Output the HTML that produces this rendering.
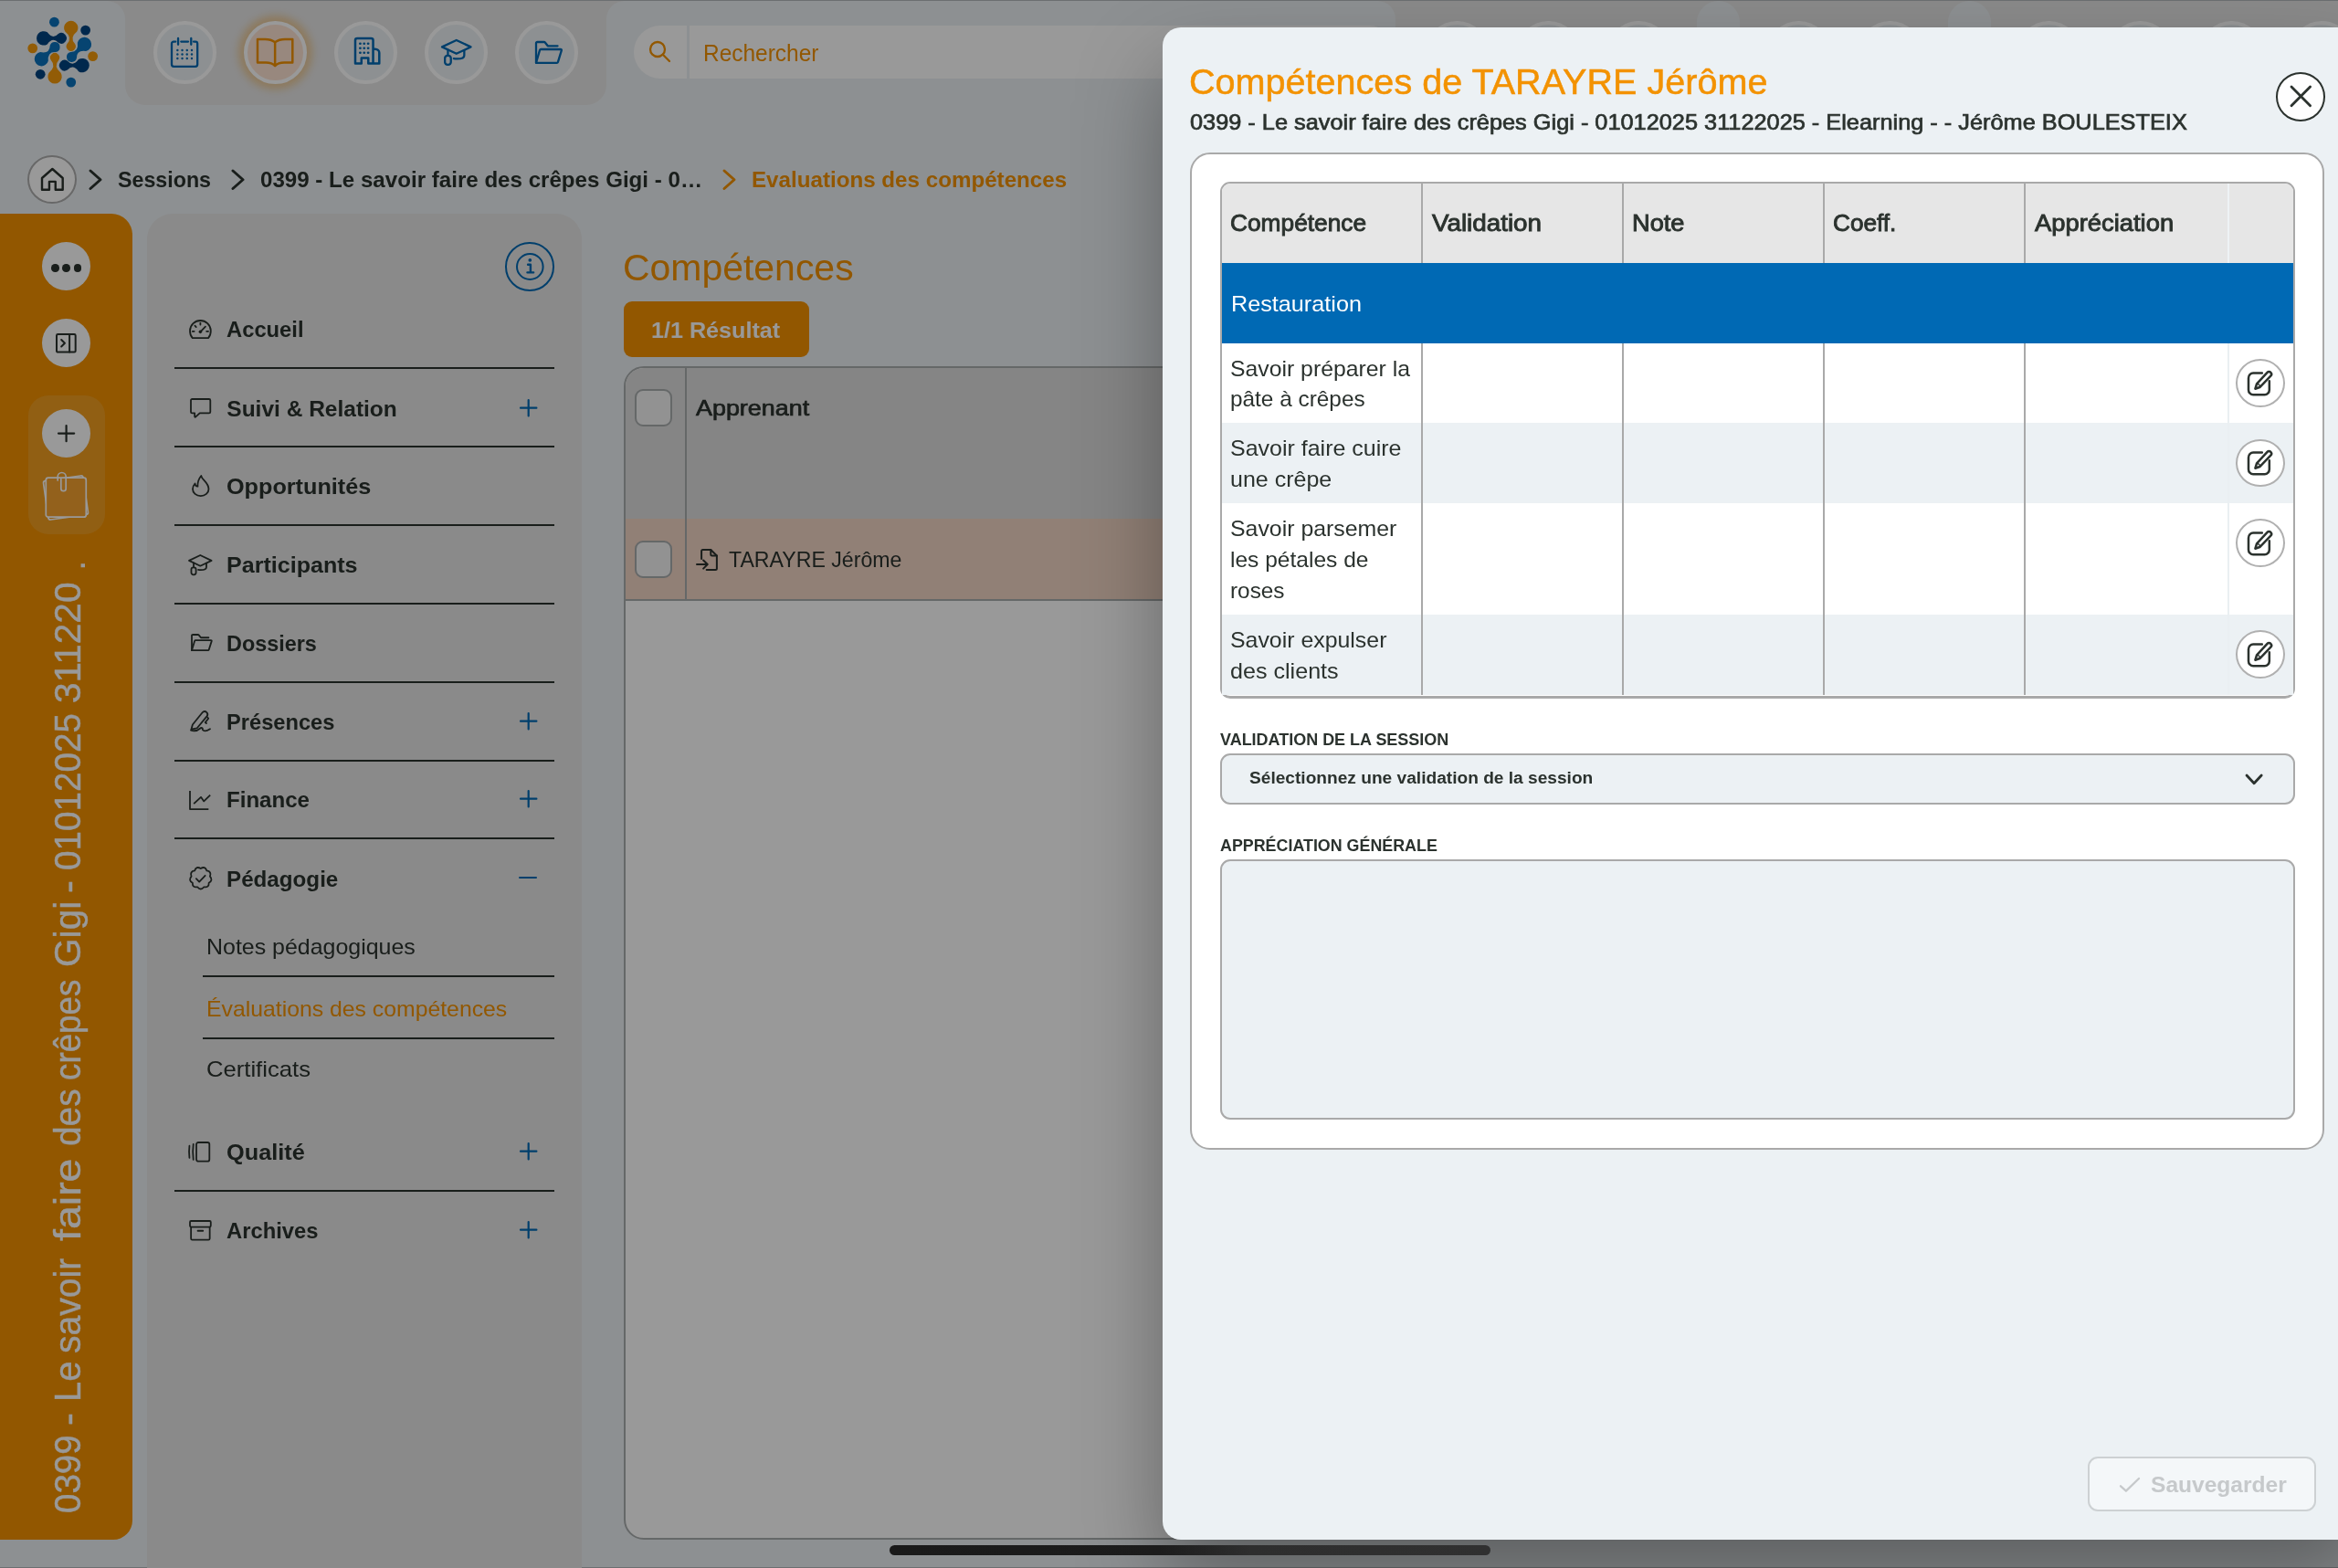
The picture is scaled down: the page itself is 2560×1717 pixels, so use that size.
<!DOCTYPE html>
<html lang="fr"><head><meta charset="utf-8"><title>Compétences de TARAYRE Jérôme</title>
<style>
html,body{margin:0;padding:0}
body{width:2560px;height:1717px;overflow:hidden;position:relative;background:#ecf1f4;font-family:"Liberation Sans",sans-serif;color:#2b322e}
.a{position:absolute;box-sizing:border-box}
.t{position:absolute;white-space:nowrap;line-height:1;transform-origin:0 50%}
.circ{position:absolute;box-sizing:border-box;border-radius:50%}
svg.i{overflow:visible}
svg.i *{vector-effect:non-scaling-stroke}
#under,#overlay,#drawer{position:absolute;left:0;top:0;width:2560px;height:1717px;overflow:hidden}
#under,#drawer{will-change:transform}
#overlay{background:rgba(0,0,0,.4)}
.ln{position:absolute;height:2px;background:#2b322e}
</style></head><body>
<div id="under">

<div class="a" style="left:0px;top:0px;width:2560px;height:1.3px;background:#b4babd"></div>
<div class="a" style="left:0px;top:1715.5px;width:2560px;height:1.5px;background:#b4babd"></div>
<div class="a" style="left:137px;top:1px;width:527px;height:113.5px;background:#e6e6e6;border-radius:0 0 22px 22px"></div>
<div class="a" style="left:110px;top:1px;width:30px;height:31px;background:#e6e6e6"></div>
<div class="a" style="left:660px;top:1px;width:30px;height:31px;background:#e6e6e6"></div>
<div class="a" style="left:1500px;top:1px;width:40px;height:31px;background:#e6e6e6"></div>
<div class="a" style="left:0px;top:1px;width:137px;height:101px;background:#ecf1f4;border-top-right-radius:20px"></div>
<div class="a" style="left:664px;top:1px;width:864px;height:101px;background:#ecf1f4;border-top-left-radius:20px;border-top-right-radius:20px"></div>
<div class="a" style="left:1528px;top:1px;width:1100px;height:113.5px;background:#e6e6e6;border-radius:0 0 0 22px"></div>
<div class="circ" style="left:1560.5px;top:22.7px;width:69.0px;height:69.0px;border:4px solid #fff;background:#ecf1f4"></div>
<div class="circ" style="left:1660.5px;top:22.7px;width:69.0px;height:69.0px;border:4px solid #fff;background:#ecf1f4"></div>
<div class="circ" style="left:1760.2px;top:22.7px;width:69.0px;height:69.0px;border:4px solid #fff;background:#ecf1f4"></div>
<div class="circ" style="left:1934.5px;top:22.7px;width:69.0px;height:69.0px;border:4px solid #fff;background:#ecf1f4"></div>
<div class="circ" style="left:2034.5px;top:22.7px;width:69.0px;height:69.0px;border:4px solid #fff;background:#ecf1f4"></div>
<div class="circ" style="left:2209.0px;top:22.7px;width:69.0px;height:69.0px;border:4px solid #fff;background:#ecf1f4"></div>
<div class="circ" style="left:2308.5px;top:22.7px;width:69.0px;height:69.0px;border:4px solid #fff;background:#ecf1f4"></div>
<div class="circ" style="left:2408.5px;top:22.7px;width:69.0px;height:69.0px;border:4px solid #fff;background:#ecf1f4"></div>
<div class="circ" style="left:2508.3px;top:22.7px;width:69.0px;height:69.0px;border:4px solid #fff;background:#ecf1f4"></div>
<div class="a" style="left:1858px;top:1px;width:47px;height:71px;background:#ecf1f4;border-radius:23.5px"></div>
<div class="a" style="left:2133px;top:1px;width:47px;height:71px;background:#ecf1f4;border-radius:23.5px"></div>
<svg class="a" style="left:0;top:0" width="140" height="110" viewBox="0 0 909.2 714.3"><circle cx="386" cy="157" r="35" fill="#0a72bd"/><path fill="#f39a0a" d="M462.6 224.5Q517.8 268.5 477.0 312.5A33 33 0 1 0 533.0 312.5Q492.2 268.5 547.4 224.5A50 50 0 1 0 462.6 224.5z"/><circle cx="608" cy="215" r="35" fill="#004480"/><path fill="#004480" d="M336.5 314.4Q375.7 260.5 414.9 304.2A38 38 0 1 0 414.9 239.8Q375.7 283.5 336.5 229.6A50 50 0 1 0 336.5 314.4z"/><circle cx="232" cy="343" r="35" fill="#f39a0a"/><path fill="#0a72bd" d="M551.3 303.8Q560.9 371.1 501.9 369.9A36 36 0 1 0 545.1 413.1Q543.9 354.1 611.2 363.7A50 50 0 1 0 551.3 303.8z"/><path fill="#0a72bd" d="M355.4 325.0Q353.3 384.0 286.5 370.7A50 50 0 1 0 343.0 433.9Q337.3 366.1 396.1 370.5A36 36 0 1 0 355.4 325.0z"/><circle cx="660" cy="400" r="35" fill="#f39a0a"/><path fill="#f39a0a" d="M362.0 427.5Q402.8 473.0 347.6 518.5A50 50 0 1 0 432.4 518.5Q377.2 473.0 418.0 427.5A33 33 0 1 0 362.0 427.5z"/><path fill="#004480" d="M480.1 497.2Q519.3 453.5 558.5 507.4A50 50 0 1 0 558.5 422.6Q519.3 476.5 480.1 432.8A38 38 0 1 0 480.1 497.2z"/><circle cx="287" cy="528" r="35" fill="#004480"/><circle cx="505" cy="585" r="35" fill="#0a72bd"/></svg>
<div class="circ" style="left:167.8px;top:22.7px;width:69.0px;height:69.0px;border:4px solid #fff;background:#ecf1f4"></div>
<div class="circ" style="left:266.7px;top:22.7px;width:69.0px;height:69.0px;border:4px solid #fff;background:#fde3d2;box-shadow:0 0 9px 6px rgba(243,146,0,.33)"></div>
<div class="circ" style="left:365.9px;top:22.7px;width:69.0px;height:69.0px;border:4px solid #fff;background:#ecf1f4"></div>
<div class="circ" style="left:464.9px;top:22.7px;width:69.0px;height:69.0px;border:4px solid #fff;background:#ecf1f4"></div>
<div class="circ" style="left:564.1px;top:22.7px;width:69.0px;height:69.0px;border:4px solid #fff;background:#ecf1f4"></div>
<svg class="a i" style="left:188.15px;top:41.55px;color:#0069b4" width="28.20" height="30.80" viewBox="2.000 1.500 20.000 20.500" preserveAspectRatio="none" fill="none" stroke="currentColor" stroke-width="2.3" stroke-linecap="round" stroke-linejoin="round"><path d="M5 3.900H3.500A1.500 1.500 0 0 0 2 5.400v15.100A1.500 1.500 0 0 0 3.500 22h17a1.500 1.500 0 0 0 1.500-1.500V5.400A1.500 1.500 0 0 0 20.500 3.900H19M9.300 3.900h5.500"/><path d="M7 1.500v4.500M17.100 1.500v4.500"/><circle cx="6.5" cy="10.2" r="0.85" fill="currentColor" stroke="none"/><circle cx="10.2" cy="10.2" r="0.85" fill="currentColor" stroke="none"/><circle cx="13.9" cy="10.2" r="0.85" fill="currentColor" stroke="none"/><circle cx="17.6" cy="10.2" r="0.85" fill="currentColor" stroke="none"/><circle cx="6.5" cy="13.2" r="0.85" fill="currentColor" stroke="none"/><circle cx="10.2" cy="13.2" r="0.85" fill="currentColor" stroke="none"/><circle cx="13.9" cy="13.2" r="0.85" fill="currentColor" stroke="none"/><circle cx="17.6" cy="13.2" r="0.85" fill="currentColor" stroke="none"/><circle cx="6.5" cy="16.1" r="0.85" fill="currentColor" stroke="none"/><circle cx="10.2" cy="16.1" r="0.85" fill="currentColor" stroke="none"/><circle cx="13.9" cy="16.1" r="0.85" fill="currentColor" stroke="none"/><circle cx="17.6" cy="16.1" r="0.85" fill="currentColor" stroke="none"/></svg>
<svg class="a i" style="left:282.25px;top:43.05px;color:#f39200" width="38.30" height="29.20" viewBox="1.500 3.000 21.000 18.300" preserveAspectRatio="none" fill="none" stroke="currentColor" stroke-width="2.5" stroke-linecap="round" stroke-linejoin="round"><path d="M12 5C10.300 3.600 8.300 3 6 3H1.500v16H6.500c2.300 0 4.200 0.700 5.500 2.300c1.300-1.600 3.200-2.300 5.500-2.300H22.500V3H18c-2.300 0-4.300 0.600-6 2zM12 5v16"/></svg>
<svg class="a i" style="left:389.25px;top:42.45px;color:#0069b4" width="26.30" height="27.60" viewBox="2.000 2.000 17.500 20.000" preserveAspectRatio="none" fill="none" stroke="currentColor" stroke-width="2.5" stroke-linecap="round" stroke-linejoin="round"><path d="M2 22V3.500A1.500 1.500 0 0 1 3.500 2h10A1.500 1.500 0 0 1 15 3.500V22H11.500V17.500H6.500V22zM15 10.500h1.500a3 3 0 0 1 3 3V22H15"/><circle cx="5.6" cy="6.2" r="0.95" fill="currentColor" stroke="none"/><circle cx="8.5" cy="6.2" r="0.95" fill="currentColor" stroke="none"/><circle cx="11.4" cy="6.2" r="0.95" fill="currentColor" stroke="none"/><circle cx="5.6" cy="9.8" r="0.95" fill="currentColor" stroke="none"/><circle cx="8.5" cy="9.8" r="0.95" fill="currentColor" stroke="none"/><circle cx="11.4" cy="9.8" r="0.95" fill="currentColor" stroke="none"/><circle cx="5.6" cy="13.4" r="0.95" fill="currentColor" stroke="none"/><circle cx="8.5" cy="13.4" r="0.95" fill="currentColor" stroke="none"/><circle cx="11.4" cy="13.4" r="0.95" fill="currentColor" stroke="none"/></svg>
<svg class="a i" style="left:484.15px;top:44.15px;color:#0069b4" width="31.50" height="26.90" viewBox="1.000 2.000 22.000 20.000" preserveAspectRatio="none" fill="none" stroke="currentColor" stroke-width="2.3" stroke-linecap="round" stroke-linejoin="round"><path d="M12 2L1 7.500L12 13L23 7.500z"/><path d="M5.500 10v4.500"/><path d="M18 10.200v4c0 2-2.500 3-5.500 3c-1 0-1.800-0.080-2.500-0.250"/><rect x="3.200" y="14.500" width="4.600" height="7.500" rx="2.100"/></svg>
<svg class="a i" style="left:586.95px;top:45.75px;color:#0069b4" width="27.90" height="22.80" viewBox="2.000 2.500 20.729 18.501" preserveAspectRatio="none" fill="none" stroke="currentColor" stroke-width="2.3" stroke-linecap="round" stroke-linejoin="round"><path d="M2 21V3.500A1 1 0 0 1 3 2.500h5.500a1 1 0 0 1 0.800 0.400L11.500 6H19.500"/><path d="M2 21L5 9.700a1 1 0 0 1 1-0.700H22a0.700 0.700 0 0 1 0.700 0.900L19.800 20.300a1 1 0 0 1-1 0.700z"/></svg>
<div class="a" style="left:693.9px;top:28.4px;width:58px;height:57.3px;background:#fff;border-radius:29px 0 0 29px"></div>
<div class="a" style="left:755.4px;top:28.4px;width:772.6px;height:57.3px;background:#fff;border-radius:0 29px 29px 0"></div>
<svg class="a i" style="left:711.95px;top:45.75px;color:#f39200" width="21.00" height="21.00" viewBox="1.000 1.000 21.000 21.000" preserveAspectRatio="none" fill="none" stroke="currentColor" stroke-width="2.3" stroke-linecap="round" stroke-linejoin="round"><circle cx="9" cy="9" r="8"/><path d="M14.800 14.800L22 22"/></svg>
<span id="t1" class="t " style="left:770.44px;top:45.5px;font-size:25px;color:#f39200;transform:scaleX(0.9787);">Rechercher</span>
<div class="circ" style="left:30.3px;top:170.0px;width:53.4px;height:52.8px;border:2px solid #adadad;background:#fff"></div>
<svg class="a i" style="left:46.00px;top:184.60px;color:#2b322e" width="22.70" height="22.80" viewBox="2.000 1.500 20.000 20.500" preserveAspectRatio="none" fill="none" stroke="currentColor" stroke-width="2.4" stroke-linecap="round" stroke-linejoin="round"><path d="M2 10.500L12 1.500l10 9V22h-7v-8H9v8H2z"/></svg>
<svg class="a i" style="left:98.50px;top:187.00px;color:#2b322e" width="11.00" height="19.50" viewBox="0.000 0.000 11.000 22.000" preserveAspectRatio="none" fill="none" stroke="currentColor" stroke-width="3" stroke-linecap="round" stroke-linejoin="round"><path d="M0 0l11 11L0 22"/></svg>
<span id="t2" class="t " style="left:129.34px;top:184.9px;font-size:24.5px;color:#2b322e;transform:scaleX(0.9485);font-weight:700;">Sessions</span>
<svg class="a i" style="left:254.50px;top:187.00px;color:#2b322e" width="11.00" height="19.50" viewBox="0.000 0.000 11.000 22.000" preserveAspectRatio="none" fill="none" stroke="currentColor" stroke-width="3" stroke-linecap="round" stroke-linejoin="round"><path d="M0 0l11 11L0 22"/></svg>
<span id="t3" class="t " style="left:285.11px;top:184.9px;font-size:24.5px;color:#2b322e;transform:scaleX(0.9846);font-weight:700;">0399 - Le savoir faire des crêpes Gigi - 0…</span>
<svg class="a i" style="left:793.00px;top:187.00px;color:#f39200" width="11.00" height="19.50" viewBox="0.000 0.000 11.000 22.000" preserveAspectRatio="none" fill="none" stroke="currentColor" stroke-width="3" stroke-linecap="round" stroke-linejoin="round"><path d="M0 0l11 11L0 22"/></svg>
<span id="t4" class="t " style="left:823.42px;top:184.9px;font-size:24.5px;color:#f39200;transform:scaleX(0.9864);font-weight:700;">Evaluations des compétences</span>
<div class="a" style="left:0px;top:234px;width:145px;height:1451.5px;background:#f39200;border-radius:0 23px 21px 0"></div>
<div class="circ" style="left:45.7px;top:265.2px;width:53.5px;height:53.3px;background:#fff"></div>
<div class="circ" style="left:56.1px;top:289.2px;width:8.5px;height:8.5px;background:#2b322e"></div>
<div class="circ" style="left:68.2px;top:289.2px;width:8.5px;height:8.5px;background:#2b322e"></div>
<div class="circ" style="left:80.5px;top:289.2px;width:8.5px;height:8.5px;background:#2b322e"></div>
<div class="circ" style="left:45.7px;top:349.2px;width:53.5px;height:53.3px;background:#fff"></div>
<svg class="a i" style="left:62.30px;top:365.90px;color:#2b322e" width="20.70" height="19.60" viewBox="0.000 0.000 22.000 21.000" preserveAspectRatio="none" fill="none" stroke="currentColor" stroke-width="2" stroke-linecap="round" stroke-linejoin="round"><rect x="0" y="0" width="22" height="21" rx="1.500"/><path d="M15 0v21M5.500 6.500l4 4-4 4"/></svg>
<div class="a" style="left:30.7px;top:433px;width:84.1px;height:152.3px;background:rgba(236,241,244,.13);border-radius:22px"></div>
<div class="circ" style="left:45.7px;top:448.0px;width:53.5px;height:53.3px;background:#fff"></div>
<svg class="a i" style="left:64.20px;top:466.00px;color:#2b322e" width="17.20" height="17.20" viewBox="0.000 0.000 20.000 20.000" preserveAspectRatio="none" fill="none" stroke="currentColor" stroke-width="2.2" stroke-linecap="round" stroke-linejoin="round"><path d="M10 0v20M0 10h20"/></svg>
<svg class="a i" style="left:46.300px;top:517px;color:#ffffff" width="52.2" height="52.5" viewBox="0 0 52.2 52.5" fill="none" stroke="currentColor" stroke-width="1.700" stroke-linejoin="round" stroke-linecap="round"><g transform="rotate(-8 26 28)"><rect x="4" y="6.500" width="44" height="43" rx="2.500"/></g><rect x="4.300" y="6.200" width="44" height="43" rx="2.500" fill="#f5a230"/><path d="M17.200 9V5a4.500 4.500 0 0 1 9 0v13a2.700 2.700 0 0 1-5.400 0V7.500"/></svg>
<span id="t5" class="t" style="left:73.5px;top:1657.1px;-webkit-text-stroke:.4px #fff;font-size:41.5px;color:#fff;transform-origin:0 0;transform:rotate(-90deg) translateY(-50%) scaleX(0.9268)">0399 </span>
<span id="t6" class="t" style="left:73.5px;top:1560.8px;-webkit-text-stroke:.4px #fff;font-size:41.5px;color:#fff;transform-origin:0 0;transform:rotate(-90deg) translateY(-50%) scaleX(1.0000)">- </span>
<span id="t7" class="t" style="left:73.5px;top:1534.8px;-webkit-text-stroke:.4px #fff;font-size:41.5px;color:#fff;transform-origin:0 0;transform:rotate(-90deg) translateY(-50%) scaleX(0.9627)">Le </span>
<span id="t8" class="t" style="left:73.5px;top:1482.3px;-webkit-text-stroke:.4px #fff;font-size:41.5px;color:#fff;transform-origin:0 0;transform:rotate(-90deg) translateY(-50%) scaleX(0.9413)">savoir </span>
<span id="t9" class="t" style="left:73.5px;top:1359.3px;-webkit-text-stroke:.4px #fff;font-size:41.5px;color:#fff;transform-origin:0 0;transform:rotate(-90deg) translateY(-50%) scaleX(1.1208)">faire </span>
<span id="t10" class="t" style="left:73.5px;top:1255.2px;-webkit-text-stroke:.4px #fff;font-size:41.5px;color:#fff;transform-origin:0 0;transform:rotate(-90deg) translateY(-50%) scaleX(0.9360)">des </span>
<span id="t11" class="t" style="left:73.5px;top:1182.9px;-webkit-text-stroke:.4px #fff;font-size:41.5px;color:#fff;transform-origin:0 0;transform:rotate(-90deg) translateY(-50%) scaleX(0.8863)">crêpes </span>
<span id="t12" class="t" style="left:73.5px;top:1058.6px;-webkit-text-stroke:.4px #fff;font-size:41.5px;color:#fff;transform-origin:0 0;transform:rotate(-90deg) translateY(-50%) scaleX(0.9795)">Gigi </span>
<span id="t13" class="t" style="left:73.5px;top:978.3px;-webkit-text-stroke:.4px #fff;font-size:41.5px;color:#fff;transform-origin:0 0;transform:rotate(-90deg) translateY(-50%) scaleX(1.0000)">- </span>
<span id="t14" class="t" style="left:73.5px;top:953.0px;-webkit-text-stroke:.4px #fff;font-size:41.5px;color:#fff;transform-origin:0 0;transform:rotate(-90deg) translateY(-50%) scaleX(0.9308)">01012025 </span>
<span id="t15" class="t" style="left:73.5px;top:770.4px;-webkit-text-stroke:.4px #fff;font-size:41.5px;color:#fff;transform-origin:0 0;transform:rotate(-90deg) translateY(-50%) scaleX(0.9784)">311220 </span>
<span class="t" style="left:76.5px;top:624.5px;font-size:41.5px;color:#fff;transform-origin:0 0;transform:rotate(-90deg) translateY(-46%)">.</span>
<div class="a" style="left:160.7px;top:234px;width:476px;height:1500px;background:#e6e6e6;border-radius:28px 28px 0 0"></div>
<div class="circ" style="left:553.2px;top:265.2px;width:53.5px;height:53.5px;border:2.5px solid #0069b4"></div>
<svg class="a i" style="left:565.70px;top:278.20px;color:#0069b4" width="28.60" height="28.00" viewBox="0.500 0.500 23.000 23.000" preserveAspectRatio="none" fill="none" stroke="currentColor" stroke-width="2" stroke-linecap="round" stroke-linejoin="round"><circle cx="12" cy="12" r="11.500"/><path d="M10.200 10.200h2.300v7M9.700 17.200h5.400" stroke-width="2.400"/><circle cx="12" cy="6.200" r="1.500" fill="currentColor" stroke="none"/></svg>
<span id="t16" class="t " style="left:248.30px;top:349.3px;font-size:24.5px;color:#2b322e;transform:scaleX(0.9702);font-weight:700;">Accueil</span>
<svg class="a i" style="left:208.00px;top:350.90px;color:#2b322e" width="22.80" height="19.10" viewBox="1.700 2.496 20.600 17.004" preserveAspectRatio="none" fill="none" stroke="currentColor" stroke-width="1.8" stroke-linecap="round" stroke-linejoin="round"><path d="M4.180 19.500A10.300 10.300 0 1 1 19.820 19.500z"/><circle cx="12" cy="13.500" r="1.600" fill="currentColor" stroke="none"/><path d="M12.700 12.800L17 8.500M12 4.800v1.700M4.200 13h1.700M18.100 13h1.700M6.600 7.600l1.200 1.200"/></svg>
<div class="ln" style="left:191px;top:402.4px;width:416px"></div>
<span id="t17" class="t " style="left:248.30px;top:435.6px;font-size:24.5px;color:#2b322e;font-weight:700;">Suivi &amp; Relation</span>
<svg class="a i" style="left:208.70px;top:437.10px;color:#2b322e" width="21.30" height="19.80" viewBox="-0.000 0.000 23.000 21.155" preserveAspectRatio="none" fill="none" stroke="currentColor" stroke-width="1.8" stroke-linecap="round" stroke-linejoin="round"><path d="M1.500 0h20a1.500 1.500 0 0 1 1.500 1.500v13.500a1.500 1.500 0 0 1-1.500 1.500H10.500L5.500 21a0.600 0.600 0 0 1-1-0.500V16.500H1.500A1.500 1.500 0 0 1 0 15V1.500A1.500 1.500 0 0 1 1.500 0z"/></svg>
<svg class="a i" style="left:569.50px;top:437.80px;color:#0069b4" width="17.40" height="17.40" viewBox="0.000 0.000 20.000 20.000" preserveAspectRatio="none" fill="none" stroke="currentColor" stroke-width="2.2" stroke-linecap="round" stroke-linejoin="round"><path d="M10 0v20M0 10h20"/></svg>
<div class="ln" style="left:191px;top:488.4px;width:416px"></div>
<span id="t18" class="t " style="left:248.30px;top:521.3px;font-size:24.5px;color:#2b322e;transform:scaleX(1.0290);font-weight:700;">Opportunités</span>
<svg class="a i" style="left:210.60px;top:521.20px;color:#2b322e" width="17.50" height="22.20" viewBox="4.000 0.500 16.000 23.000" preserveAspectRatio="none" fill="none" stroke="currentColor" stroke-width="1.8" stroke-linecap="round" stroke-linejoin="round"><path d="M12.500 0.500C13 5 20 8 20 15.500A8 8 0 0 1 4 15.500C4 13 5 11 6.300 9.300C6.500 11.300 7.500 12.500 9 12.600C8.800 8.500 10.300 3.500 12.500 0.500z"/></svg>
<div class="ln" style="left:191px;top:574.4px;width:416px"></div>
<span id="t19" class="t " style="left:248.30px;top:607.3px;font-size:24.5px;color:#2b322e;transform:scaleX(1.0236);font-weight:700;">Participants</span>
<svg class="a i" style="left:207.20px;top:607.70px;color:#2b322e" width="24.60" height="21.30" viewBox="1.000 2.000 22.000 20.000" preserveAspectRatio="none" fill="none" stroke="currentColor" stroke-width="1.8" stroke-linecap="round" stroke-linejoin="round"><path d="M12 2L1 7.500L12 13L23 7.500z"/><path d="M5.500 10v4.500"/><path d="M18 10.200v4c0 2-2.500 3-5.500 3c-1 0-1.800-0.080-2.500-0.250"/><rect x="3.200" y="14.500" width="4.600" height="7.500" rx="2.100"/></svg>
<div class="ln" style="left:191px;top:660.1999999999999px;width:416px"></div>
<span id="t20" class="t " style="left:248.30px;top:692.8px;font-size:24.5px;color:#2b322e;transform:scaleX(0.9544);font-weight:700;">Dossiers</span>
<svg class="a i" style="left:209.70px;top:695.30px;color:#2b322e" width="21.80" height="17.20" viewBox="2.000 2.500 20.729 18.501" preserveAspectRatio="none" fill="none" stroke="currentColor" stroke-width="1.8" stroke-linecap="round" stroke-linejoin="round"><path d="M2 21V3.500A1 1 0 0 1 3 2.500h5.500a1 1 0 0 1 0.800 0.400L11.500 6H19.500"/><path d="M2 21L5 9.700a1 1 0 0 1 1-0.700H22a0.700 0.700 0 0 1 0.700 0.900L19.800 20.300a1 1 0 0 1-1 0.700z"/></svg>
<div class="ln" style="left:191px;top:746.1999999999999px;width:416px"></div>
<span id="t21" class="t " style="left:248.30px;top:778.5px;font-size:24.5px;color:#2b322e;transform:scaleX(0.9657);font-weight:700;">Présences</span>
<svg class="a i" style="left:209.00px;top:778.90px;color:#2b322e" width="21.00" height="21.30" viewBox="0.300 1.750 22.200 21.260" preserveAspectRatio="none" fill="none" stroke="currentColor" stroke-width="1.8" stroke-linecap="round" stroke-linejoin="round"><path d="M0.800 21.300L2.300 16.200L13.800 2.800a3.300 3.300 0 0 1 5 4.300L7.300 20.200z"/><path d="M19.600 8.300l1 1.200l-3.700 4.300l1.300 1"/><path d="M0.300 22.300c4 1.200 8 0.400 10.500-1.800c1.600-1.400 3.700-0.700 3 1.200c1.700 2.200 5.200 1.400 8.700-0.700"/></svg>
<svg class="a i" style="left:569.50px;top:780.70px;color:#0069b4" width="17.40" height="17.40" viewBox="0.000 0.000 20.000 20.000" preserveAspectRatio="none" fill="none" stroke="currentColor" stroke-width="2.2" stroke-linecap="round" stroke-linejoin="round"><path d="M10 0v20M0 10h20"/></svg>
<div class="ln" style="left:191px;top:831.9px;width:416px"></div>
<span id="t22" class="t " style="left:248.30px;top:864.2px;font-size:24.5px;color:#2b322e;transform:scaleX(0.9831);font-weight:700;">Finance</span>
<svg class="a i" style="left:208.00px;top:865.60px;color:#2b322e" width="22.20" height="20.10" viewBox="0.000 0.000 24.000 22.000" preserveAspectRatio="none" fill="none" stroke="currentColor" stroke-width="1.8" stroke-linecap="butt" stroke-linejoin="round"><path d="M0 0v22h22"/><path d="M4.500 15.500l8.500-8 3.500 5L24 5"/></svg>
<svg class="a i" style="left:569.50px;top:866.40px;color:#0069b4" width="17.40" height="17.40" viewBox="0.000 0.000 20.000 20.000" preserveAspectRatio="none" fill="none" stroke="currentColor" stroke-width="2.2" stroke-linecap="round" stroke-linejoin="round"><path d="M10 0v20M0 10h20"/></svg>
<div class="ln" style="left:191px;top:917.4px;width:416px"></div>
<span id="t23" class="t " style="left:248.30px;top:950.5px;font-size:24.5px;color:#2b322e;transform:scaleX(0.9873);font-weight:700;">Pédagogie</span>
<svg class="a i" style="left:207.70px;top:949.60px;color:#2b322e" width="23.50" height="23.50" viewBox="-0.040 0.371 24.081 23.809" preserveAspectRatio="none" fill="none" stroke="currentColor" stroke-width="1.8" stroke-linecap="round" stroke-linejoin="round"><path d="M12.00 1.40Q16.93 -1.53 18.81 3.88Q24.47 4.80 22.44 10.16Q26.18 14.50 21.18 17.30Q21.26 23.03 15.63 21.96Q12.00 26.40 8.37 21.96Q2.74 23.03 2.82 17.30Q-2.18 14.50 1.56 10.16Q-0.47 4.80 5.19 3.88Q7.07 -1.53 12.00 1.40z"/><path d="M7 12.700l3.400 3.400L17 9.300"/></svg>
<div class="a" style="left:568.4px;top:960.3000000000001px;width:19.6px;height:2.2px;background:#0069b4;border-radius:1px"></div>
<span id="t24" class="t " style="left:248.30px;top:1249.7px;font-size:24.5px;color:#2b322e;transform:scaleX(1.0326);font-weight:700;">Qualité</span>
<svg class="a i" style="left:206.70px;top:1250.60px;color:#2b322e" width="22.30" height="20.70" viewBox="0.050 0.000 23.450 22.000" preserveAspectRatio="none" fill="none" stroke="currentColor" stroke-width="1.8" stroke-linecap="round" stroke-linejoin="round"><rect x="8.500" y="0" width="15" height="22" rx="2.200"/><path d="M5 2c-0.800 6-0.800 12 0 18M0.500 4c-0.600 4.700-0.600 9.300 0 14"/></svg>
<svg class="a i" style="left:569.50px;top:1251.90px;color:#0069b4" width="17.40" height="17.40" viewBox="0.000 0.000 20.000 20.000" preserveAspectRatio="none" fill="none" stroke="currentColor" stroke-width="2.2" stroke-linecap="round" stroke-linejoin="round"><path d="M10 0v20M0 10h20"/></svg>
<div class="ln" style="left:191px;top:1302.9px;width:416px"></div>
<span id="t25" class="t " style="left:248.30px;top:1335.9px;font-size:24.5px;color:#2b322e;transform:scaleX(0.9700);font-weight:700;">Archives</span>
<svg class="a i" style="left:208.00px;top:1336.50px;color:#2b322e" width="22.80" height="20.60" viewBox="0.000 0.000 24.000 22.000" preserveAspectRatio="none" fill="none" stroke="currentColor" stroke-width="1.8" stroke-linecap="round" stroke-linejoin="round"><rect x="0" y="0" width="24" height="7" rx="1.300"/><path d="M1.200 7v13.500a1.500 1.500 0 0 0 1.500 1.500h18.600a1.500 1.500 0 0 0 1.500-1.500V7M9 11.500h6"/></svg>
<svg class="a i" style="left:569.50px;top:1338.10px;color:#0069b4" width="17.40" height="17.40" viewBox="0.000 0.000 20.000 20.000" preserveAspectRatio="none" fill="none" stroke="currentColor" stroke-width="2.2" stroke-linecap="round" stroke-linejoin="round"><path d="M10 0v20M0 10h20"/></svg>
<span id="t26" class="t " style="left:226.20px;top:1024.7px;font-size:24px;color:#2b322e;transform:scaleX(1.0393);">Notes pédagogiques</span>
<div class="ln" style="left:221.600px;top:1068px;width:385.4px"></div>
<span id="t27" class="t " style="left:226.20px;top:1092.7px;font-size:24px;color:#f39200;transform:scaleX(1.0325);">Évaluations des compétences</span>
<div class="ln" style="left:221.600px;top:1136px;width:385.4px"></div>
<span id="t28" class="t " style="left:226.20px;top:1159.3px;font-size:24px;color:#2b322e;transform:scaleX(1.0681);">Certificats</span>
<span id="t29" class="t " style="left:682.48px;top:272.7px;font-size:40.5px;color:#f39200;transform:scaleX(1.0109);">Compétences</span>
<div class="a" style="left:683px;top:330px;width:202.5px;height:60.5px;background:#f39200;border-radius:9px"></div>
<span id="t30" class="t " style="left:712.83px;top:349.7px;font-size:24px;color:#fff;transform:scaleX(1.0479);font-weight:700;">1/1 Résultat</span>
<div class="a" style="left:683px;top:401px;width:1701px;height:1284.5px;background:#fff;border:2px solid #a9adae;border-radius:22px;overflow:hidden"></div>
<div class="a" style="left:685px;top:403px;width:1697px;height:165px;background:#dedede;border-top-left-radius:20px"></div>
<div class="a" style="left:685px;top:568px;width:1697px;height:88px;background:#f2d5c5"></div>
<div class="a" style="left:685px;top:656px;width:1697px;height:2px;background:#a9adae"></div>
<div class="a" style="left:750px;top:403px;width:2px;height:253px;background:#a9adae"></div>
<div class="a" style="left:695px;top:426px;width:41px;height:41px;background:#f3f3f3;border:2px solid #a9adae;border-radius:9px"></div>
<div class="a" style="left:695px;top:592px;width:41px;height:41px;background:#f3f3f3;border:2px solid #a9adae;border-radius:9px"></div>
<span id="t31" class="t " style="left:761.50px;top:435.0px;font-size:24.5px;color:#2b322e;transform:scaleX(1.0978);-webkit-text-stroke:0.7px #2b322e;">Apprenant</span>
<svg class="a i" style="left:762.50px;top:601.50px;color:#2b322e" width="21.90" height="22.10" viewBox="0.500 1.000 21.500 22.000" preserveAspectRatio="none" fill="none" stroke="currentColor" stroke-width="2" stroke-linecap="round" stroke-linejoin="round"><path d="M5.500 11V2.500A1.500 1.500 0 0 1 7 1h8.500l6.500 6.500V21.500A1.500 1.500 0 0 1 20.500 23H11"/><path d="M15.500 1v5A1.500 1.500 0 0 0 17 7.500h5"/><path d="M0.500 17h11M7.500 12.500l4.500 4.500l-4.500 4.500"/></svg>
<span id="t32" class="t " style="left:798.12px;top:600.7px;font-size:24px;color:#2b322e;transform:scaleX(0.9639);">TARAYRE Jérôme</span>
</div><div id="overlay"></div>
<div id="drawer">
<div class="a" style="left:1272.700px;top:30px;width:1320px;height:1656.3px;background:#ecf1f4;border-radius:20px;box-shadow:0 45px 92px rgba(0,0,0,.34)"></div>
<span id="t33" class="t " style="left:1302.45px;top:70.8px;font-size:38px;color:#f39200;transform:scaleX(1.0414);-webkit-text-stroke:0.5px #f39200;">Compétences de TARAYRE Jérôme</span>
<span id="t34" class="t " style="left:1302.56px;top:122.4px;font-size:24.3px;color:#2b322e;transform:scaleX(1.0422);-webkit-text-stroke:0.7px #2b322e;">0399 - Le savoir faire des crêpes Gigi - 01012025 31122025 - Elearning - - Jérôme BOULESTEIX</span>
<div class="circ" style="left:2492.0px;top:78.9px;width:53.9px;height:53.7px;border:2px solid #2b322e;background:#fefefe"></div>
<svg class="a i" style="left:2508.60px;top:95.40px;color:#2b322e" width="20.60" height="20.70" viewBox="0.000 0.000 20.000 20.000" preserveAspectRatio="none" fill="none" stroke="currentColor" stroke-width="2.8" stroke-linecap="round" stroke-linejoin="round"><path d="M0 0l20 20M20 0L0 20"/></svg>
<div class="a" style="left:1303.2px;top:166.5px;width:1242px;height:1092.5px;background:#fff;border:2px solid #a9a9a9;border-radius:22px"></div>
<div class="a" style="left:1336px;top:199px;width:1177px;height:565.7px;background:#fff;border:2px solid #a9a9a9;border-bottom-width:3.5px;border-radius:11px;overflow:hidden"></div>
<div class="a" style="left:1338px;top:201px;width:1173px;height:88px;background:#e6e6e6;border-radius:9px 9px 0 0"></div>
<div class="a" style="left:1338px;top:288px;width:1173px;height:87.6px;background:#0069b4"></div>
<div class="a" style="left:1338px;top:463px;width:1173px;height:87.79999999999995px;background:#ecf1f4"></div>
<div class="a" style="left:1338px;top:672.6px;width:1173px;height:88.60000000000002px;background:#ecf1f4"></div>
<div class="a" style="left:1556.4px;top:201px;width:2px;height:87px;background:#a9a9a9"></div>
<div class="a" style="left:1556.4px;top:375.6px;width:2px;height:385.6px;background:#a9a9a9"></div>
<div class="a" style="left:1776.2px;top:201px;width:2px;height:87px;background:#a9a9a9"></div>
<div class="a" style="left:1776.2px;top:375.6px;width:2px;height:385.6px;background:#a9a9a9"></div>
<div class="a" style="left:1995.8px;top:201px;width:2px;height:87px;background:#a9a9a9"></div>
<div class="a" style="left:1995.8px;top:375.6px;width:2px;height:385.6px;background:#a9a9a9"></div>
<div class="a" style="left:2216.2px;top:201px;width:2px;height:87px;background:#a9a9a9"></div>
<div class="a" style="left:2216.2px;top:375.6px;width:2px;height:385.6px;background:#a9a9a9"></div>
<div class="a" style="left:2439px;top:201px;width:2px;height:87px;background:#eef2f5"></div>
<div class="a" style="left:2439px;top:375.6px;width:2px;height:385.6px;background:#eaeff2"></div>
<div class="circ" style="left:2448.3px;top:393.2px;width:53.6px;height:52.7px;border:2px solid #b0b0b0;background:#fff"></div>
<svg class="a i" style="left:2462.35px;top:406.55px;color:#2b322e" width="25.10" height="25.30" viewBox="-0.000 0.917 21.983 21.333" preserveAspectRatio="none" fill="none" stroke="currentColor" stroke-width="2.5" stroke-linecap="round" stroke-linejoin="round"><path d="M13 2.250H4.500A4.500 4.500 0 0 0 0 6.750V17.750A4.500 4.500 0 0 0 4.500 22.250H15.500A4.500 4.500 0 0 0 20 17.750V9.600"/><path d="M18 1.600a2.300 2.300 0 0 1 3.300 3.300L10.800 15.300L6.500 16.700L7.900 12.200z"/><path d="M8.600 11.600l2.800 2.900" stroke-width="1.500"/></svg>
<div class="circ" style="left:2448.3px;top:480.6px;width:53.6px;height:52.7px;border:2px solid #b0b0b0;background:#fff"></div>
<svg class="a i" style="left:2462.35px;top:493.95px;color:#2b322e" width="25.10" height="25.30" viewBox="-0.000 0.917 21.983 21.333" preserveAspectRatio="none" fill="none" stroke="currentColor" stroke-width="2.5" stroke-linecap="round" stroke-linejoin="round"><path d="M13 2.250H4.500A4.500 4.500 0 0 0 0 6.750V17.750A4.500 4.500 0 0 0 4.500 22.250H15.500A4.500 4.500 0 0 0 20 17.750V9.600"/><path d="M18 1.600a2.300 2.300 0 0 1 3.300 3.300L10.800 15.300L6.500 16.700L7.900 12.200z"/><path d="M8.600 11.600l2.800 2.900" stroke-width="1.500"/></svg>
<div class="circ" style="left:2448.3px;top:568.4px;width:53.6px;height:52.7px;border:2px solid #b0b0b0;background:#fff"></div>
<svg class="a i" style="left:2462.35px;top:581.75px;color:#2b322e" width="25.10" height="25.30" viewBox="-0.000 0.917 21.983 21.333" preserveAspectRatio="none" fill="none" stroke="currentColor" stroke-width="2.5" stroke-linecap="round" stroke-linejoin="round"><path d="M13 2.250H4.500A4.500 4.500 0 0 0 0 6.750V17.750A4.500 4.500 0 0 0 4.500 22.250H15.500A4.500 4.500 0 0 0 20 17.750V9.600"/><path d="M18 1.600a2.300 2.300 0 0 1 3.300 3.300L10.800 15.300L6.500 16.700L7.900 12.200z"/><path d="M8.600 11.600l2.800 2.900" stroke-width="1.500"/></svg>
<div class="circ" style="left:2448.3px;top:690.2px;width:53.6px;height:52.7px;border:2px solid #b0b0b0;background:#fff"></div>
<svg class="a i" style="left:2462.35px;top:703.55px;color:#2b322e" width="25.10" height="25.30" viewBox="-0.000 0.917 21.983 21.333" preserveAspectRatio="none" fill="none" stroke="currentColor" stroke-width="2.5" stroke-linecap="round" stroke-linejoin="round"><path d="M13 2.250H4.500A4.500 4.500 0 0 0 0 6.750V17.750A4.500 4.500 0 0 0 4.500 22.250H15.500A4.500 4.500 0 0 0 20 17.750V9.600"/><path d="M18 1.600a2.300 2.300 0 0 1 3.300 3.300L10.800 15.300L6.500 16.700L7.900 12.200z"/><path d="M8.600 11.600l2.800 2.900" stroke-width="1.500"/></svg>
<span id="t35" class="t " style="left:1346.57px;top:232.1px;font-size:25.8px;color:#2b322e;transform:scaleX(1.0192);-webkit-text-stroke:0.9px #2b322e;">Compétence</span>
<span id="t36" class="t " style="left:1567.50px;top:232.1px;font-size:25.8px;color:#2b322e;transform:scaleX(1.0777);-webkit-text-stroke:0.9px #2b322e;">Validation</span>
<span id="t37" class="t " style="left:1786.67px;top:232.1px;font-size:25.8px;color:#2b322e;transform:scaleX(1.0537);-webkit-text-stroke:0.9px #2b322e;">Note</span>
<span id="t38" class="t " style="left:2007.27px;top:232.1px;font-size:25.8px;color:#2b322e;transform:scaleX(1.0150);-webkit-text-stroke:0.9px #2b322e;">Coeff.</span>
<span id="t39" class="t " style="left:2228.20px;top:232.1px;font-size:25.8px;color:#2b322e;transform:scaleX(1.0607);-webkit-text-stroke:0.9px #2b322e;">Appréciation</span>
<span id="t40" class="t " style="left:1348.19px;top:321.0px;font-size:23.8px;color:#fff;transform:scaleX(1.0593);">Restauration</span>
<span id="t41" class="t " style="left:1346.60px;top:391.5px;font-size:24px;color:#2b322e;transform:scaleX(1.0324);">Savoir préparer la</span>
<span id="t42" class="t " style="left:1346.60px;top:425.4px;font-size:24px;color:#2b322e;transform:scaleX(1.0150);">pâte à crêpes</span>
<span id="t43" class="t " style="left:1346.60px;top:479.0px;font-size:24px;color:#2b322e;transform:scaleX(1.0412);">Savoir faire cuire</span>
<span id="t44" class="t " style="left:1346.60px;top:513.1px;font-size:24px;color:#2b322e;transform:scaleX(1.0416);">une crêpe</span>
<span id="t45" class="t " style="left:1346.60px;top:566.9px;font-size:24px;color:#2b322e;transform:scaleX(1.0360);">Savoir parsemer</span>
<span id="t46" class="t " style="left:1346.60px;top:601.0px;font-size:24px;color:#2b322e;transform:scaleX(1.0228);">les pétales de</span>
<span id="t47" class="t " style="left:1346.60px;top:635.0px;font-size:24px;color:#2b322e;transform:scaleX(1.0140);">roses</span>
<span id="t48" class="t " style="left:1346.60px;top:689.1px;font-size:24px;color:#2b322e;transform:scaleX(1.0363);">Savoir expulser</span>
<span id="t49" class="t " style="left:1346.60px;top:723.2px;font-size:24px;color:#2b322e;transform:scaleX(1.0463);">des clients</span>
<span id="t50" class="t " style="left:1335.90px;top:800.5px;font-size:18.3px;color:#2b322e;transform:scaleX(0.9830);font-weight:700;">VALIDATION DE LA SESSION</span>
<div class="a" style="left:1336px;top:825px;width:1177px;height:56px;background:#ecf1f4;border:2px solid #a9a9a9;border-radius:11px"></div>
<span id="t51" class="t " style="left:1368.48px;top:843.2px;font-size:18.3px;color:#2b322e;transform:scaleX(1.0462);font-weight:700;">Sélectionnez une validation de la session</span>
<svg class="a i" style="left:2459.80px;top:848.50px;color:#2b322e" width="16.20" height="8.80" viewBox="0.000 0.000 20.000 10.000" preserveAspectRatio="none" fill="none" stroke="currentColor" stroke-width="2.8" stroke-linecap="round" stroke-linejoin="round"><path d="M0 0l10 10L20 0"/></svg>
<span id="t52" class="t " style="left:1335.61px;top:917.1px;font-size:18.3px;color:#2b322e;transform:scaleX(0.9770);font-weight:700;">APPRÉCIATION GÉNÉRALE</span>
<div class="a" style="left:1336px;top:941.2px;width:1177px;height:285px;background:#ecf1f4;border:2px solid #a9a9a9;border-radius:11px"></div>
<div class="a" style="left:2286.4px;top:1595px;width:249.4px;height:60.4px;background:#f4f7f9;border:2px solid #cdd1d3;border-radius:11px"></div>
<svg class="a i" style="left:2321.85px;top:1619.15px;color:#c6c9cb" width="20.00" height="13.70" viewBox="0.000 1.000 22.000 16.500" preserveAspectRatio="none" fill="none" stroke="currentColor" stroke-width="2.3" stroke-linecap="round" stroke-linejoin="round"><path d="M0 11l6.500 6.500L22 1"/></svg>
<span id="t53" class="t " style="left:2355.29px;top:1613.7px;font-size:24px;color:#c6c9cb;transform:scaleX(1.0231);font-weight:700;">Sauvegarder</span>
<div class="a" style="left:974px;top:1692px;width:658px;height:10.6px;background:linear-gradient(90deg,#1a1a1a 0%,#1c1c1c 45%,#2e2e2e 60%,#303030 100%);border-radius:6px"></div>
</div></body></html>
